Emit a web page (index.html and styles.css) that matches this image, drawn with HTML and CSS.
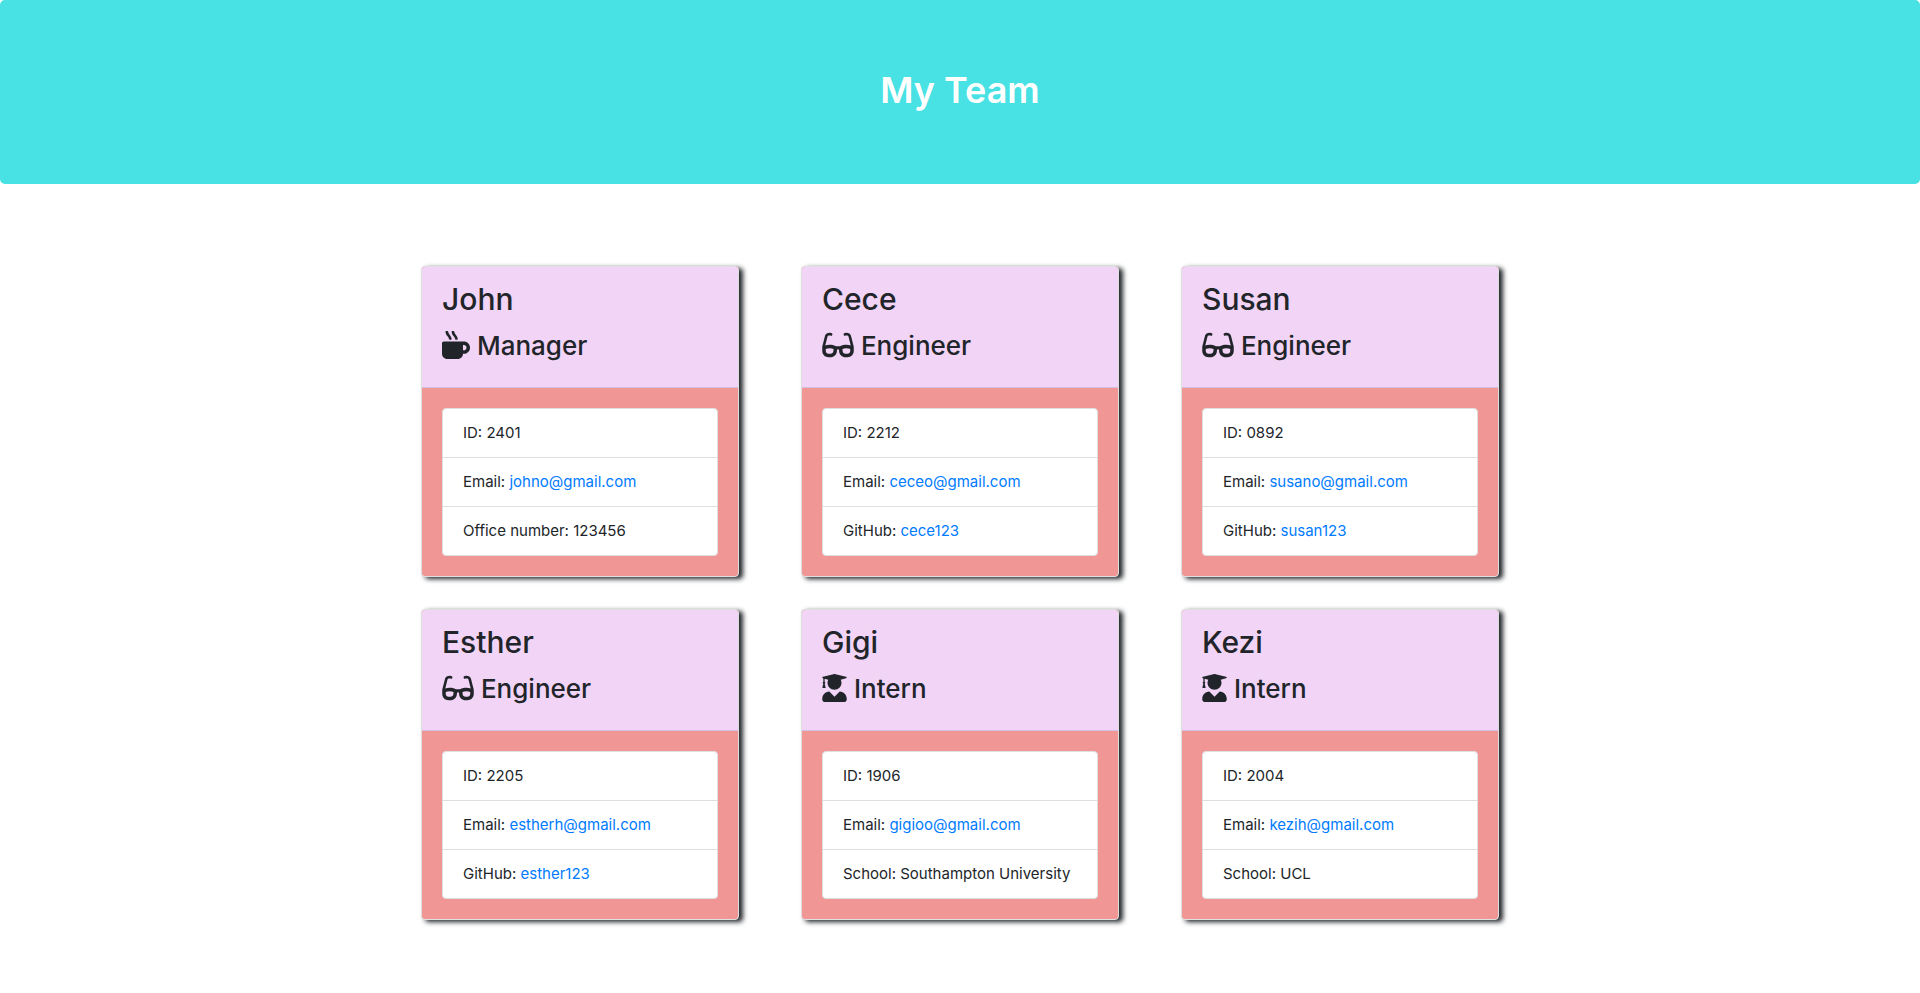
FILE: index.html
```html
<!DOCTYPE html>
<html lang="en">
<head>
<meta charset="utf-8">
<title>My Team</title>
<link rel="stylesheet" href="styles.css">
</head>
<body>
<svg class="sprite" aria-hidden="true">
  <symbol id="mug" viewBox="0 0 512 512"><path d="M127.1 146.5c1.3 7.7 8 13.5 16 13.5h16.5c9.8 0 17.6-8.5 16.3-18-3.8-28.2-16.4-54.2-36.6-74.7-14.4-14.7-23.6-33.3-26.4-53.5C111.8 5.9 105 0 96.8 0H80.4C70.6 0 63 8.5 64.1 18c3.9 31.9 18 61.3 40.6 84.4 12 12.2 19.7 27.5 22.4 44.1zm112 0c1.3 7.7 8 13.5 16 13.5h16.5c9.8 0 17.6-8.5 16.3-18-3.8-28.2-16.4-54.2-36.6-74.7-14.4-14.7-23.6-33.3-26.4-53.5C223.8 5.9 217 0 208.8 0h-16.4c-9.8 0-17.4 8.5-16.3 18 3.9 31.9 18 61.3 40.6 84.4 12 12.2 19.7 27.5 22.4 44.1zM400 192H32c-17.7 0-32 14.3-32 32v192c0 53 43 96 96 96h192c53 0 96-43 96-96h16c61.8 0 112-50.2 112-112s-50.2-112-112-112zm0 160h-16v-96h16c26.5 0 48 21.5 48 48s-21.5 48-48 48z"/></symbol>
  <symbol id="glasses" viewBox="0 0 576 512"><path d="M574.1 280.37L528.75 98.66c-5.91-23.7-21.59-44.05-43-55.81-21.44-11.73-46.97-14.11-70.19-6.33l-15.25 5.08c-8.39 2.79-12.92 11.86-10.12 20.24l5.06 15.18c2.79 8.38 11.85 12.91 20.23 10.12l13.18-4.39c10.87-3.62 23-3.57 33.16 1.73 10.29 5.37 17.57 14.56 20.37 25.82l38.46 153.82c-22.19-6.81-49.79-12.46-81.2-12.46-34.77 0-73.98 7.02-114.85 26.74h-73.18c-40.87-19.74-80.08-26.75-114.86-26.75-31.42 0-59.02 5.65-81.21 12.46l38.46-153.83c2.79-11.25 10.09-20.45 20.38-25.81 10.16-5.3 22.28-5.35 33.15-1.73l13.17 4.39c8.38 2.79 17.44-1.74 20.23-10.12l5.06-15.18c2.8-8.38-1.73-17.45-10.12-20.24l-15.25-5.08c-23.22-7.78-48.75-5.41-70.19 6.33-21.41 11.77-37.09 32.11-43 55.8L1.9 280.37A64.218 64.218 0 0 0 0 295.86v70.25C0 429.01 51.58 480 115.2 480h37.12c60.28 0 110.37-45.94 114.88-105.37l2.93-38.63h35.75l2.93 38.63C313.31 434.06 363.4 480 423.68 480h37.12c63.62 0 115.2-50.99 115.2-113.88v-70.25c0-5.23-.64-10.43-1.9-15.5zm-370.72 89.42c-1.97 25.91-24.4 46.21-51.06 46.21H115.2C86.97 416 64 393.62 64 366.11v-37.54c18.12-6.49 43.42-12.92 72.58-12.92 23.86 0 47.26 4.33 69.93 12.92l-3.13 41.22zM512 366.12c0 27.51-22.97 49.88-51.2 49.88h-37.12c-26.67 0-49.1-20.3-51.06-46.21l-3.13-41.22c22.67-8.59 46.08-12.92 69.95-12.92 29.17 0 54.48 6.44 72.57 12.93v37.54z"/></symbol>
  <symbol id="graduate" viewBox="0 0 448 512"><path d="M319.4 320.6L224 416l-95.4-95.4C57.1 323.7 0 382.2 0 454.4v9.6c0 26.5 21.5 48 48 48h352c26.5 0 48-21.5 48-48v-9.6c0-72.2-57.1-130.7-128.6-133.8zM13.6 79.8l6.4 1.5v58.4c-7 4.2-12 11.5-12 20.3 0 8.4 4.6 15.4 11.1 19.7L3.5 242c-1.7 6.9 2.1 14 7.6 14h41.8c5.5 0 9.3-7.1 7.6-14l-15.6-62.3C51.4 175.4 56 168.4 56 160c0-8.8-5-16.1-12-20.3V87.1l66 15.9c-8.6 17.2-14 36.4-14 57 0 70.7 57.3 128 128 128s128-57.3 128-128c0-20.6-5.3-39.8-14-57l96.3-23.2c18.2-4.4 18.2-27.1 0-31.5l-190.4-46c-13-3.1-26.7-3.1-39.7 0L13.6 48.2c-18.1 4.4-18.1 27.2 0 31.6z"/></symbol>
</svg>
<header class="banner"><h1>My Team</h1></header>
<main class="team">
  <article class="card">
    <div class="card-header">
      <h2>John</h2>
      <h3><svg class="icon mug"><use href="#mug"/></svg> Manager</h3>
    </div>
    <div class="card-body">
      <ul>
        <li>ID: 2401</li>
        <li>Email: <a href="mailto:johno@gmail.com">johno@gmail.com</a></li>
        <li>Office number: 123456</li>
      </ul>
    </div>
  </article>
  <article class="card">
    <div class="card-header">
      <h2>Cece</h2>
      <h3><svg class="icon glasses"><use href="#glasses"/></svg> Engineer</h3>
    </div>
    <div class="card-body">
      <ul>
        <li>ID: 2212</li>
        <li>Email: <a href="mailto:ceceo@gmail.com">ceceo@gmail.com</a></li>
        <li>GitHub: <a href="https://github.com/cece123">cece123</a></li>
      </ul>
    </div>
  </article>
  <article class="card">
    <div class="card-header">
      <h2>Susan</h2>
      <h3><svg class="icon glasses"><use href="#glasses"/></svg> Engineer</h3>
    </div>
    <div class="card-body">
      <ul>
        <li>ID: 0892</li>
        <li>Email: <a href="mailto:susano@gmail.com">susano@gmail.com</a></li>
        <li>GitHub: <a href="https://github.com/susan123">susan123</a></li>
      </ul>
    </div>
  </article>
  <article class="card">
    <div class="card-header">
      <h2>Esther</h2>
      <h3><svg class="icon glasses"><use href="#glasses"/></svg> Engineer</h3>
    </div>
    <div class="card-body">
      <ul>
        <li>ID: 2205</li>
        <li>Email: <a href="mailto:estherh@gmail.com">estherh@gmail.com</a></li>
        <li>GitHub: <a href="https://github.com/esther123">esther123</a></li>
      </ul>
    </div>
  </article>
  <article class="card">
    <div class="card-header">
      <h2>Gigi</h2>
      <h3><svg class="icon graduate"><use href="#graduate"/></svg> Intern</h3>
    </div>
    <div class="card-body">
      <ul>
        <li>ID: 1906</li>
        <li>Email: <a href="mailto:gigioo@gmail.com">gigioo@gmail.com</a></li>
        <li>School: Southampton University</li>
      </ul>
    </div>
  </article>
  <article class="card">
    <div class="card-header">
      <h2>Kezi</h2>
      <h3><svg class="icon graduate"><use href="#graduate"/></svg> Intern</h3>
    </div>
    <div class="card-body">
      <ul>
        <li>ID: 2004</li>
        <li>Email: <a href="mailto:kezih@gmail.com">kezih@gmail.com</a></li>
        <li>School: UCL</li>
      </ul>
    </div>
  </article>
</main>
</body>
</html>
```
FILE: styles.css
```css
* { box-sizing: border-box; }

body {
  margin: 0;
  background: #fff;
  color: #212529;
  font: 400 15px/24px Inter, "Liberation Sans", sans-serif;
}

h1, h2, h3, ul { margin: 0; padding: 0; }
h1, h2, h3 { font-weight: 500; }

.sprite { display: none; }

.banner {
  padding: 66px 32px 70px;
  border-radius: 5px;
  background: #48e1e4;
  color: #fff;
  text-align: center;
}

.banner h1 {
  font-size: 36px;
  line-height: 48px;
  font-weight: 600;
}

.team {
  display: grid;
  grid-template-columns: repeat(auto-fit, minmax(318px, 1fr));
  gap: 32px 62px;
  max-width: 1142px;
  margin: 82px auto 0;
  padding: 0 32px 32px;
}

.card {
  border: 1px solid #dfdfdf;
  border-radius: 4px;
  background: #f09796;
  box-shadow: 4px 2px 5px #212529;
}

.card-header {
  padding: 12px 20px 20px;
  border-bottom: 1px solid #d3bfdf;
  border-radius: 3px 3px 0 0;
  background: #f1d4f6;
}

.card-header h2 {
  margin-bottom: 6px;
  font-size: 30px;
  line-height: 40px;
}

.card-header h3 {
  font-size: 26px;
  line-height: 42px;
}

.icon {
  height: 28px;
  fill: currentColor;
  vertical-align: -4px;
}

.mug { width: 28px; }
.glasses { width: 32px; }
.graduate { width: 25px; }

.card-body { padding: 20px; }

.card-body ul {
  border: 1px solid #dfdfdf;
  border-radius: 4px;
  background: #fff;
  list-style: none;
}

.card-body li { padding: 12px 20px; }
.card-body li + li { border-top: 1px solid #dfdfdf; }

a {
  color: #007bff;
  text-decoration: none;
}

a:hover { text-decoration: underline; }
```
